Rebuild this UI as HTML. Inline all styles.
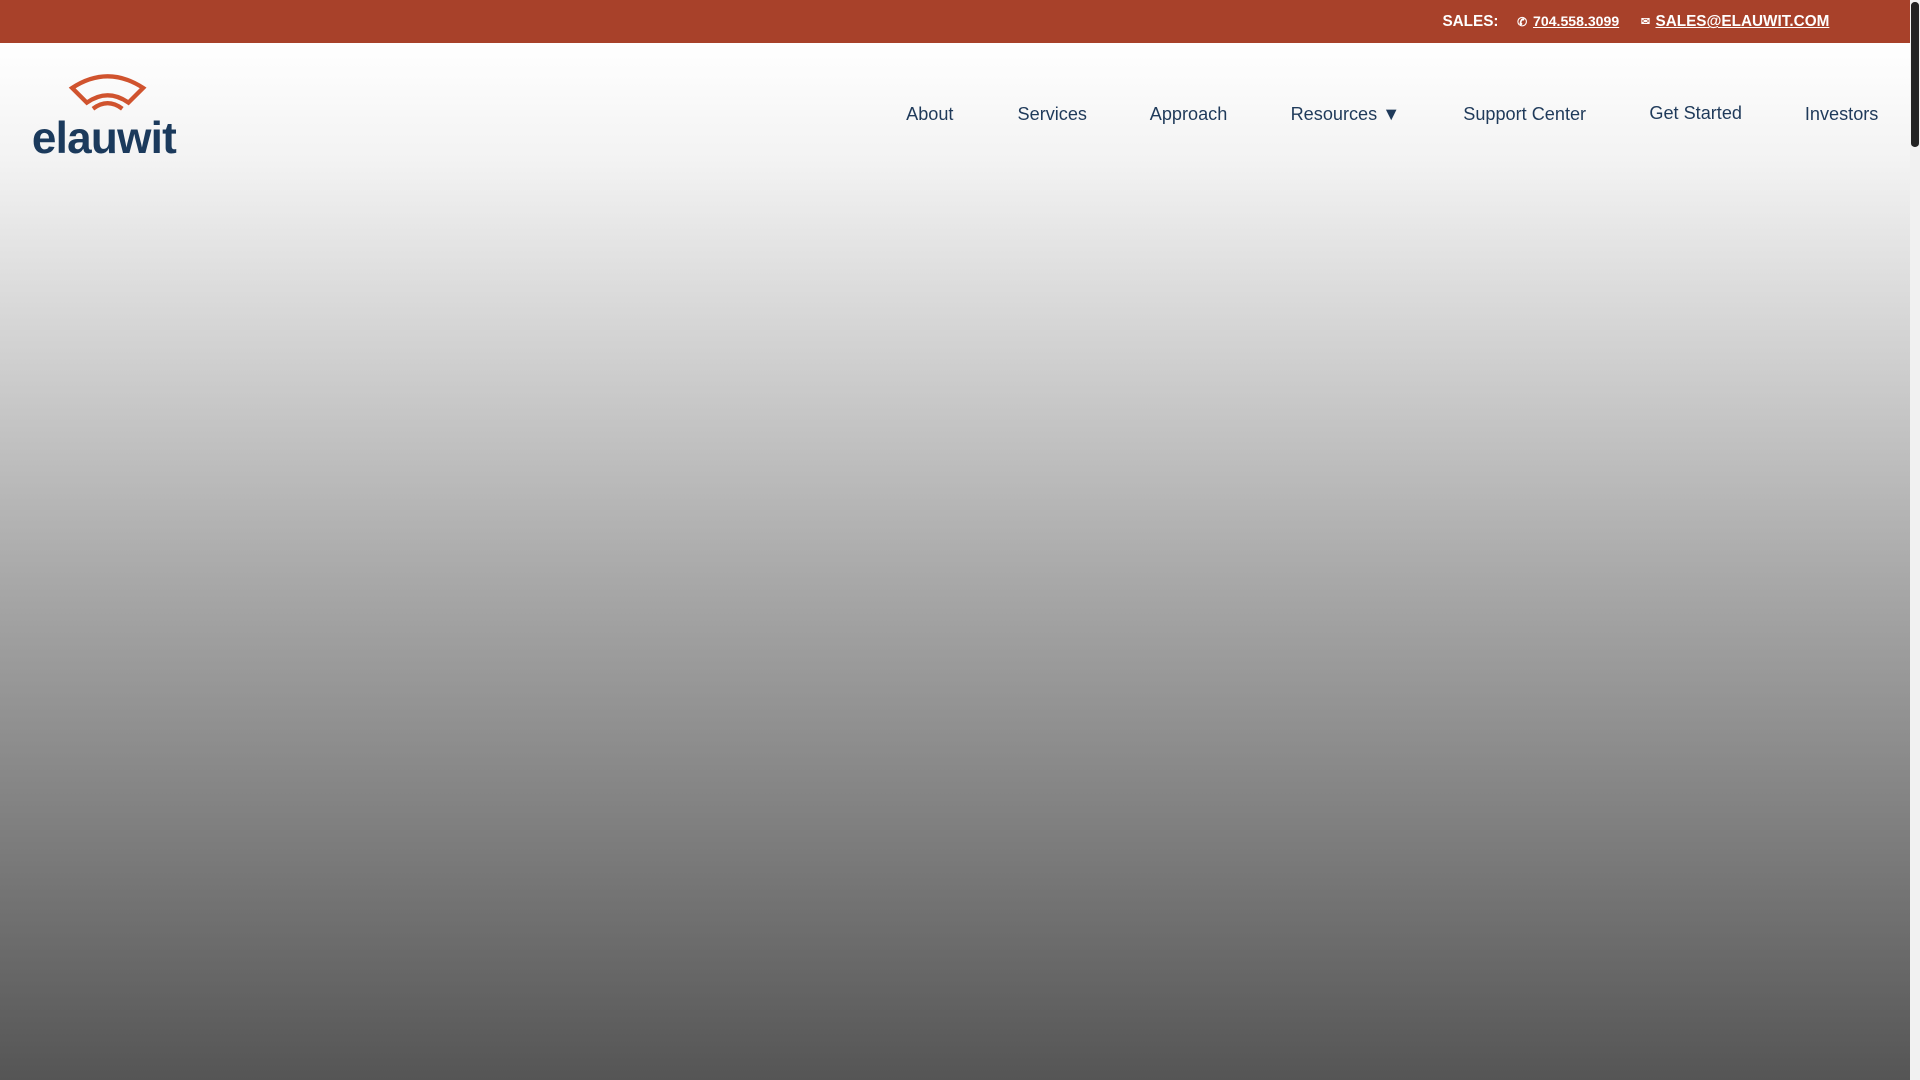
<!DOCTYPE html>
<html><head><meta charset="utf-8"><style>
html,body{margin:0;padding:0;overflow:hidden;width:1920px;height:1080px}
#w{zoom:1.22449;width:1568px;height:882px;position:relative;font-family:"Liberation Sans",sans-serif;background:linear-gradient(#fff 35px,#f3f3f3 130px,#a9a9a9 470px,#555 882px)}
.top{position:absolute;left:0;top:0;width:1560px;height:35px;background:#a8412a;color:#fff;font-size:12.5px;font-weight:bold}
.top span{position:absolute;top:11px}
.top u{color:#fff}
.nav{position:absolute;top:85px;font-size:14.8px;color:#1f3a5a}
.sb{position:absolute;right:0;top:0;width:8px;height:882px;background:#f1f1f1}
.sb div{position:absolute;left:1px;top:2px;width:6px;height:118px;background:#222;border-radius:3px}
.logo{position:absolute;left:26px;top:93px;font-size:36px;font-weight:bold;color:#1b3a5c;letter-spacing:-0.6px}
</style></head><body><div id="w">
<div class="top">
<span style="left:1178px">SALES:</span>
<span style="left:1239px;font-size:10px;top:12px">&#9990;</span>
<span style="left:1252px;font-size:11.5px;top:11px"><u>704.558.3099</u></span>
<span style="left:1340px;font-size:9px;top:12px">&#9993;</span>
<span style="left:1352px"><u>SALES@ELAUWIT.COM</u></span>
</div>
<svg style="position:absolute;left:54px;top:59px" width="68" height="34" viewBox="0 0 68 34">
<path d="M5 13 Q34 -6 63 13 L51 25 Q34 13 17 25 Z" fill="none" stroke="#d0532e" stroke-width="3.5"/>
<path d="M22 30 Q34 21 46 30" fill="none" stroke="#d0532e" stroke-width="3.5"/>
</svg>
<div class="logo">elauwit</div>
<div class="nav" style="left:740px">About</div>
<div class="nav" style="left:831px">Services</div>
<div class="nav" style="left:939px">Approach</div>
<div class="nav" style="left:1054px">Resources &#9660;</div>
<div class="nav" style="left:1195px">Support Center</div>
<div class="nav" style="left:1347px;top:84px">Get Started</div>
<div class="nav" style="left:1474px">Investors</div>
<div class="sb"><div></div></div>
</div></body></html>
